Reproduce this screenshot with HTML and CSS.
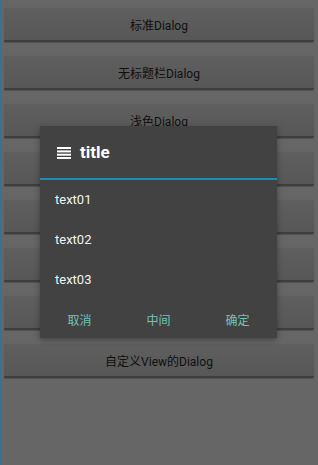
FILE: index.html
```html
<!DOCTYPE html>
<html lang="zh">

<head>
    <meta charset="utf-8">
    <link rel="stylesheet" href="styles.css">
</head>

<body>
    <div class="screen">
        <div class="button-list">
            <button class="demo-button">标准Dialog</button>
            <button class="demo-button">无标题栏Dialog</button>
            <button class="demo-button">浅色Dialog</button>
            <!-- labels of these four are covered by the dialog -->
            <button class="demo-button"></button>
            <button class="demo-button"></button>
            <button class="demo-button"></button>
            <button class="demo-button"></button>
            <button class="demo-button">自定义View的Dialog</button>
        </div>

        <div class="dialog" role="dialog" aria-labelledby="dialog-title">
            <div class="dialog-header">
                <svg class="dialog-icon" width="14" height="12" viewBox="0 0 14 12">
                    <rect x="0" y="0" width="14" height="2" fill="#fff" />
                    <rect x="0" y="3.4" width="14" height="2" fill="#fff" />
                    <rect x="0" y="6.7" width="14" height="2" fill="#fff" />
                    <rect x="0" y="10" width="14" height="2" fill="#fff" />
                </svg>
                <h3 id="dialog-title">title</h3>
            </div>
            <ul class="dialog-items">
                <li>text01</li>
                <li>text02</li>
                <li>text03</li>
            </ul>
            <div class="dialog-actions">
                <button>取消</button>
                <button>中间</button>
                <button>确定</button>
            </div>
        </div>
    </div>
</body>

</html>
```

FILE: styles.css
```css
body {
    margin: 0;
    padding: 0;
    background-color: #666666;
    font-family: Roboto, "Noto Sans CJK SC", sans-serif;
}

.screen {
    position: relative;
    width: 318px;
    height: 465px;
    overflow: hidden;
    border-left: 1px solid #3f6f8f;
    box-sizing: border-box;
}

.button-list {
    display: flex;
    flex-direction: column;
    gap: 13px;
    padding: 7px 4px 0 3px;
}

.demo-button {
    height: 35px;
    border: none;
    border-top: 1px solid #646464;
    border-bottom: 2px solid #3e3e3e;
    border-radius: 1px;
    background: linear-gradient(#5f5f5f, #575757);
    box-shadow: 0 1px 1px rgba(0, 0, 0, 0.2);
    color: #101010;
    font-family: Roboto, "Noto Sans CJK SC", sans-serif;
    font-size: 12px;
    padding: 0;
}

.dialog {
    position: absolute;
    left: 39px;
    top: 126px;
    width: 237px;
    height: 212px;
    background-color: #424242;
    box-shadow: 0 2px 6px rgba(0, 0, 0, 0.35);
    display: flex;
    flex-direction: column;
}

.dialog-header {
    height: 52px;
    display: flex;
    align-items: center;
    padding-left: 17px;
    gap: 9px;
    border-bottom: 2px solid #1b8db5;
}

.dialog-icon {
    margin-top: 1px;
}

.dialog-header h3 {
    margin: 0;
    color: #ffffff;
    font-size: 17px;
    font-weight: bold;
}

.dialog-items {
    list-style: none;
    margin: 0;
    padding: 0;
}

.dialog-items li {
    height: 40px;
    line-height: 40px;
    padding-left: 15px;
    color: #f2f2f2;
    font-size: 13px;
}

.dialog-actions {
    flex-grow: 1;
    display: grid;
    grid-template-columns: 1fr 1fr 1fr;
}

.dialog-actions button {
    background: none;
    border: none;
    padding: 0;
    color: #72c2b8;
    font-family: Roboto, "Noto Sans CJK SC", sans-serif;
    font-size: 12px;
}
```
